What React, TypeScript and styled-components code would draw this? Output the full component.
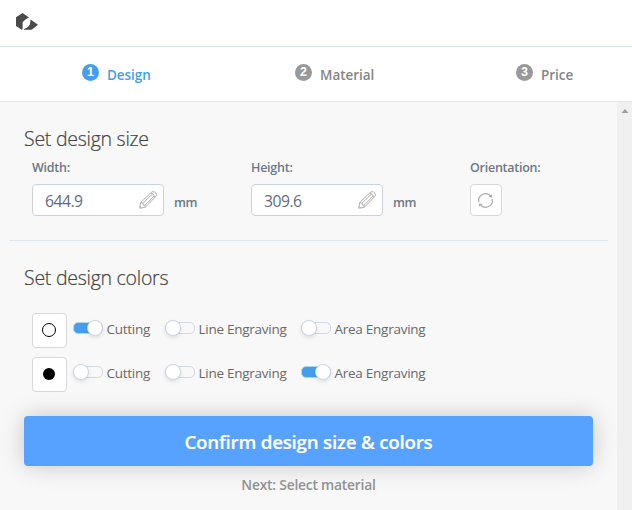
import React, { useState } from "react";
import styled, { createGlobalStyle } from "styled-components";

const GlobalStyle = createGlobalStyle`
  * { box-sizing: border-box; }
  body {
    margin: 0;
    background: #f8f8f8;
    font-family: "Open Sans", "Noto Sans", sans-serif;
    overflow: hidden;
  }
  button, input { font-family: inherit; }
`;

const Page = styled.div`
  width: 632px;
  height: 510px;
  display: flex;
  flex-direction: column;
`;

const Header = styled.header`
  height: 47px;
  flex: none;
  padding: 13px 16px 0;
  background: #fff;
  border-bottom: 1px solid #dae4ec;
  svg { display: block; }
`;

const Steps = styled.nav`
  height: 55px;
  flex: none;
  display: grid;
  grid-template-columns: 213px 221px auto;
  padding: 17px 0 0 82px;
  background: #fff;
  border-bottom: 1px solid #dee4e9;
`;

const Step = styled.div<{ $active?: boolean }>`
  display: flex;
  gap: 8px;
  height: 24px;
  color: ${(p) => (p.$active ? "#459eeb" : "#858585")};
  font-size: 13.5px;
  font-weight: 600;
  line-height: 22px;
  letter-spacing: -0.05px;
  white-space: nowrap;
`;

const StepNumber = styled.span<{ $active?: boolean }>`
  width: 17px;
  height: 17px;
  border-radius: 50%;
  background: ${(p) => (p.$active ? "#459eeb" : "#999")};
  color: #fff;
  font: 700 12.5px/17px "Liberation Sans", Arial, sans-serif;
  text-align: center;
`;

const Body = styled.div`
  flex: 1;
  display: flex;
  min-height: 0;
`;

const Content = styled.main`
  width: 617px;
  background: #f8f8f8;
`;

const Scrollbar = styled.div`
  width: 15px;
  background: #f0f0f0;
  padding: 6px 0 0 4px;
  svg { display: block; }
`;

const SizeSection = styled.section`
  height: 139px;
  margin: 0 9px;
  padding: 24px 15px 0;
  border-bottom: 1px solid #dfe7ee;
`;

const ColorSection = styled.section`
  height: 175px;
  padding: 24px 24px 0;
`;

const Title = styled.h2`
  margin: 0;
  height: 26px;
  color: #444;
  font-size: 19.5px;
  font-weight: 300;
  line-height: 26px;
  letter-spacing: -0.26px;
  white-space: nowrap;
  -webkit-text-stroke: 0.2px #444;
`;

const Fields = styled.div`
  display: grid;
  grid-template-columns: 219px 219px 100px;
  padding: 6px 0 0 8px;
`;

const FieldLabel = styled.div`
  height: 26px;
  color: #6b7886;
  font-size: 12.5px;
  font-weight: 600;
  line-height: 20px;
  letter-spacing: -0.25px;
`;

const InputLine = styled.div`
  display: flex;
  align-items: center;
`;

const InputBox = styled.div`
  width: 132px;
  height: 32px;
  display: flex;
  align-items: center;
  justify-content: space-between;
  padding: 0 6px 0 12px;
  background: #fff;
  border: 1px solid #cbd2dc;
  border-radius: 4px;
`;

const NumberInput = styled.input`
  width: 80px;
  height: 30px;
  padding: 2px 0 0;
  border: 0;
  outline: 0;
  background: transparent;
  color: #5f6c7e;
  font-size: 15.7px;
  letter-spacing: -0.5px;
`;

const Unit = styled.span`
  padding: 5px 0 0 10px;
  color: #6b7886;
  font-size: 12.5px;
  font-weight: 600;
  line-height: 18px;
  letter-spacing: -0.4px;
`;

const IconButton = styled.button`
  width: 32px;
  height: 32px;
  display: grid;
  place-items: center;
  padding: 1px 1px 0 0;
  background: #fff;
  border: 1px solid #d8d8d8;
  border-radius: 4px;
`;

const ColorRows = styled.div`
  display: grid;
  gap: 9px;
  padding: 22px 0 0 8px;
`;

const ColorRow = styled.div`
  height: 35px;
  display: grid;
  grid-template-columns: 41px 92px 136px 130px;
`;

const Swatch = styled.div`
  width: 35px;
  height: 35px;
  display: grid;
  place-items: center;
  background: #fff;
  border: 1px solid #d8d8d8;
  border-radius: 4px;
`;

const ToggleLabel = styled.label`
  height: 35px;
  display: flex;
  align-items: flex-start;
  gap: 3.5px;
  padding-top: 7px;
`;

const Track = styled.button<{ $on: boolean }>`
  width: 30px;
  height: 12px;
  flex: none;
  display: flex;
  align-items: center;
  justify-content: ${(p) => (p.$on ? "flex-end" : "flex-start")};
  margin-top: 2px;
  padding: 0;
  border: 1px solid ${(p) => (p.$on ? "#b9d3ea" : "#d0d8e0")};
  border-radius: 5px;
  background: ${(p) => (p.$on ? "#459eeb" : "#f8f8f8")};
`;

const Knob = styled.span`
  width: 16px;
  height: 16px;
  flex: none;
  margin: 0 -1px;
  border: 1px solid #ccd5df;
  border-radius: 50%;
  background: #fff;
  box-shadow: 0 2px 4px rgba(0, 0, 0, 0.1);
`;

const ToggleText = styled.span`
  color: #6a6a6a;
  font-size: 13.5px;
  line-height: 19px;
  letter-spacing: -0.26px;
  white-space: nowrap;
`;

const ConfirmButton = styled.button`
  width: 569px;
  height: 50px;
  display: block;
  margin: 0 24px;
  padding: 2px 0 0;
  border: 0;
  border-radius: 4px;
  background: #57a1ff;
  box-shadow: 0 0 24px rgba(0, 0, 0, 0.2);
  color: #fff;
  font-size: 18.7px;
  font-weight: 600;
  line-height: 24px;
  letter-spacing: -0.2px;
  -webkit-text-stroke: 0.2px #fff;
`;

const NextHint = styled.div`
  padding-top: 9px;
  color: #929292;
  font-size: 13.8px;
  font-weight: 600;
  line-height: 20px;
  letter-spacing: -0.2px;
  text-align: center;
`;

const Logo = () => (
  <svg width="22" height="18" viewBox="0 0 22 18" fill="#4a4a4a">
    <path d="M0 4.3 6.6 0 13 4.4 9 6.8 6.6 9.2V16.2L5.7 16.7 0 12.9Z" />
    <path d="M14.6 6.5 22 11.8 15.7 16.8H8.1V15.9L12 14 14 11.3Z" />
  </svg>
);

const Pencil = () => (
  <svg width="18" height="18" viewBox="0 0 18 18" fill="none" stroke="#b1b1b1" strokeWidth="1" strokeLinejoin="round">
    <path d="M.7 17.2 1.6 11.6 12.2 1.5Q13.3.4 15.2.8 17 1.4 17.3 3.1 17.5 4.7 16.4 5.8L6.3 16.3Z" />
    <path d="M1.6 11.6 4 12.2 4.3 14 6 14.2 6.3 16.3M4 12.2 13.4 3M6 14.2 15.3 4.9M11.8 1.9Q14.9 2.7 16 6.2M.8 15.3 2.7 17" />
  </svg>
);

const Rotate = () => (
  <svg width="15" height="15" viewBox="0 0 15 15">
    <path d="M.9 9.2A6.8 6.8 0 0 1 12.8 3.3M14.1 5.8A6.8 6.8 0 0 1 2.2 11.7" fill="none" stroke="#adadad" strokeWidth="1.25" />
    <path d="M14 1.2V4.6L10.5 4.1ZM1 13.8V10.4L4.5 10.9Z" fill="#adadad" />
  </svg>
);

const modes = ["Cutting", "Line Engraving", "Area Engraving"];

const Dimension = ({ label, value }: { label: string; value: string }) => (
  <div>
    <FieldLabel>{label}</FieldLabel>
    <InputLine>
      <InputBox>
        <NumberInput aria-label={label} defaultValue={value} />
        <Pencil />
      </InputBox>
      <Unit>mm</Unit>
    </InputLine>
  </div>
);

const ColorOption = ({ filled, initial }: { filled: boolean; initial: number }) => {
  const [selected, setSelected] = useState(initial);
  return (
    <ColorRow>
      <Swatch>
        <svg width="15" height="15" viewBox="0 0 15 15">
          {filled ? (
            <circle cx="7" cy="7" r="6" />
          ) : (
            <circle cx="7" cy="7" r="6.5" fill="none" stroke="#000" strokeWidth="1" />
          )}
        </svg>
      </Swatch>
      {modes.map((mode, i) => (
        <ToggleLabel key={mode}>
          <Track type="button" role="switch" aria-checked={selected === i} $on={selected === i} onClick={() => setSelected(i)}>
            <Knob />
          </Track>
          <ToggleText>{mode}</ToggleText>
        </ToggleLabel>
      ))}
    </ColorRow>
  );
};

export default function App() {
  return (
    <Page>
      <GlobalStyle />
      <Header><Logo /></Header>
      <Steps>
        <Step $active><StepNumber $active>1</StepNumber><span>Design</span></Step>
        <Step><StepNumber>2</StepNumber><span>Material</span></Step>
        <Step><StepNumber>3</StepNumber><span>Price</span></Step>
      </Steps>
      <Body>
        <Content>
          <SizeSection>
            <Title>Set design size</Title>
            <Fields>
              <Dimension label="Width:" value="644.9" />
              <Dimension label="Height:" value="309.6" />
              <div>
                <FieldLabel>Orientation:</FieldLabel>
                <IconButton aria-label="Rotate"><Rotate /></IconButton>
              </div>
            </Fields>
          </SizeSection>
          <ColorSection>
            <Title>Set design colors</Title>
            <ColorRows>
              <ColorOption filled={false} initial={0} />
              <ColorOption filled initial={2} />
            </ColorRows>
          </ColorSection>
          <ConfirmButton>Confirm design size &amp; colors</ConfirmButton>
          <NextHint>Next: Select material</NextHint>
        </Content>
        <Scrollbar>
          <svg width="8" height="5" viewBox="0 0 8 5"><path d="M.5 5 4 1 7.5 5Z" fill="#9c9c9c" /></svg>
        </Scrollbar>
      </Body>
    </Page>
  );
}
